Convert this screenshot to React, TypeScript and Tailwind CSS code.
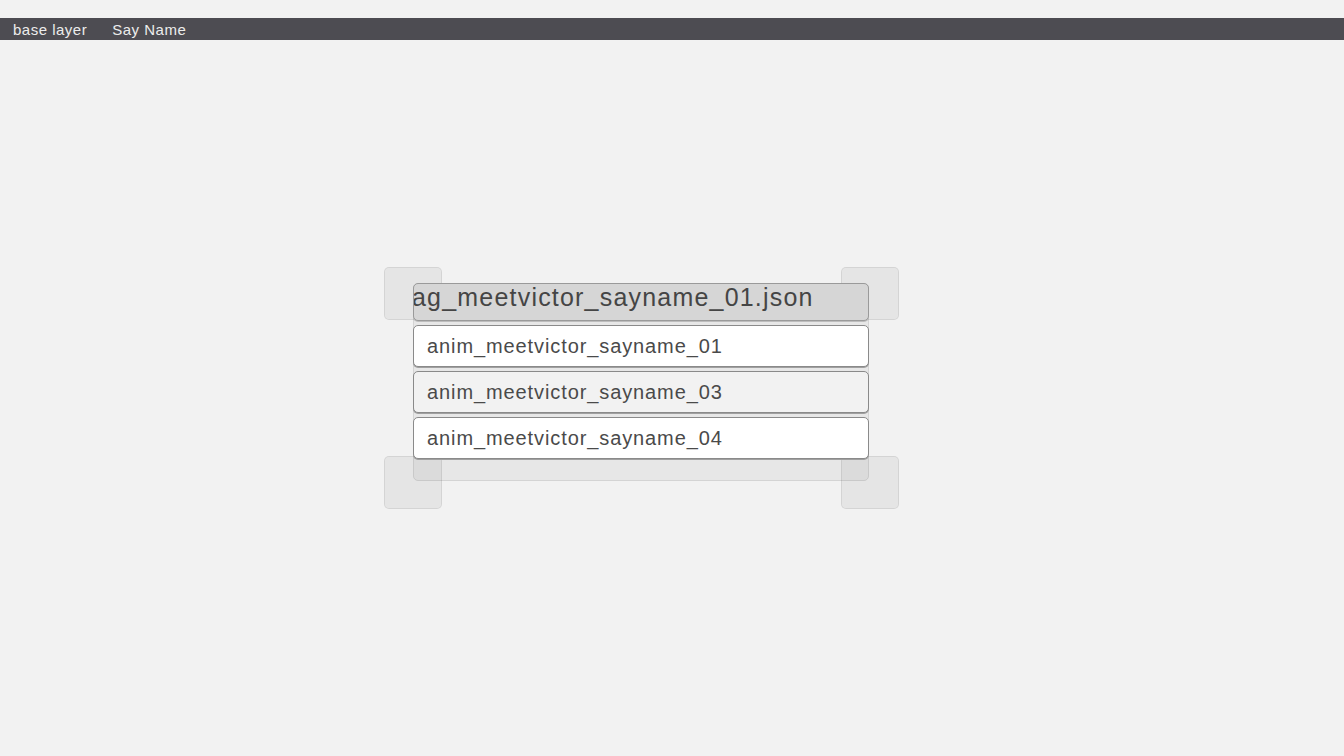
import React from 'react';

const ROWS = [
  { name: 'anim_meetvictor_sayname_01', bg: 'bg-white' },
  { name: 'anim_meetvictor_sayname_03', bg: 'bg-[#f2f2f2]' },
  { name: 'anim_meetvictor_sayname_04', bg: 'bg-white' },
];

const Handle = ({ pos }: { pos: string }) => (
  <div
    className={`absolute w-[58px] h-[53px] rounded-[5px] bg-black/[0.05] border border-black/[0.08] ${pos}`}
  />
);

export default function App() {
  return (
    <div
      className="w-full h-[756px] bg-[#f2f2f2] pt-[18px] flex flex-col overflow-hidden"
      style={{ fontFamily: '"Liberation Sans", Arial, sans-serif' }}
    >
      {/* layer bar */}
      <div className="h-[22px] bg-[#4d4c52] flex items-center text-[15px] tracking-[0.5px] text-[#ececec] pl-[13px] gap-[25px] leading-none">
        <span>base layer</span>
        <span>Say Name</span>
      </div>

      {/* canvas */}
      <div className="flex-1 pt-[243px] pl-[413px]">
        <div className="relative w-[456px] h-[198px] bg-[#e7e7e7] border border-[#d4d4d4] rounded-[5px] flex flex-col gap-[4px]">
          {/* resize handles sit under the list items */}
          <Handle pos="-left-[30px] -top-[17px]" />
          <Handle pos="-right-[31px] -top-[17px]" />
          <Handle pos="-left-[30px] -bottom-[29px]" />
          <Handle pos="-right-[31px] -bottom-[29px]" />

          <div className="relative h-[38px] -m-px mb-0 bg-[#d6d6d6] border border-[#9a9a9a] rounded-[5px] shadow-[0_1px_0_#bdbdbd] overflow-hidden flex items-center">
            <span className="text-[25px] tracking-[1.2px] text-[#454545] leading-none -ml-[2px] -mt-[10px] whitespace-nowrap">
              ag_meetvictor_sayname_01.json
            </span>
          </div>
          {ROWS.map((r) => (
            <div
              key={r.name}
              className={`relative h-[42px] -mx-px ${r.bg} border border-[#8a8a8a] rounded-[5px] shadow-[0_1px_0_#a0a0a0] flex items-center pl-[13px]`}
            >
              <span className="text-[20px] tracking-[0.9px] text-[#4a4a4a] leading-none">{r.name}</span>
            </div>
          ))}
        </div>
      </div>
    </div>
  );
}
